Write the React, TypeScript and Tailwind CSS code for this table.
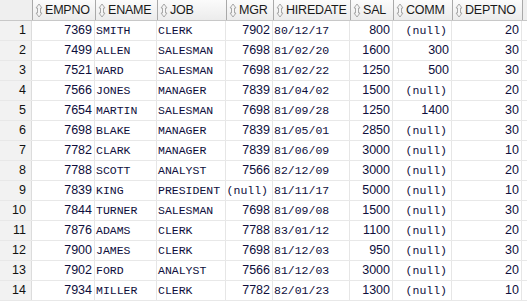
import React from 'react';

type Emp = [string, string, string, string, string, string, string, string];

const cols = ['EMPNO', 'ENAME', 'JOB', 'MGR', 'HIREDATE', 'SAL', 'COMM', 'DEPTNO'];

const rows: Emp[] = [
  ['7369', 'SMITH', 'CLERK', '7902', '80/12/17', '800', '', '20'],
  ['7499', 'ALLEN', 'SALESMAN', '7698', '81/02/20', '1600', '300', '30'],
  ['7521', 'WARD', 'SALESMAN', '7698', '81/02/22', '1250', '500', '30'],
  ['7566', 'JONES', 'MANAGER', '7839', '81/04/02', '1500', '', '20'],
  ['7654', 'MARTIN', 'SALESMAN', '7698', '81/09/28', '1250', '1400', '30'],
  ['7698', 'BLAKE', 'MANAGER', '7839', '81/05/01', '2850', '', '30'],
  ['7782', 'CLARK', 'MANAGER', '7839', '81/06/09', '3000', '', '10'],
  ['7788', 'SCOTT', 'ANALYST', '7566', '82/12/09', '3000', '', '20'],
  ['7839', 'KING', 'PRESIDENT', '', '81/11/17', '5000', '', '10'],
  ['7844', 'TURNER', 'SALESMAN', '7698', '81/09/08', '1500', '', '30'],
  ['7876', 'ADAMS', 'CLERK', '7788', '83/01/12', '1100', '', '20'],
  ['7900', 'JAMES', 'CLERK', '7698', '81/12/03', '950', '', '30'],
  ['7902', 'FORD', 'ANALYST', '7566', '81/12/03', '3000', '', '20'],
  ['7934', 'MILLER', 'CLERK', '7782', '82/01/23', '1300', '', '10'],
];

// which columns hold numbers (right aligned)
const numeric = [true, false, false, true, false, true, true, true];

const grid = 'grid grid-cols-[32px_63px_62px_69px_47px_77px_43px_59px_70px_1fr]';
const sans = "font-['Liberation_Sans',Arial,sans-serif] text-[12.5px]";
const head = "font-['Liberation_Sans',Arial,sans-serif] text-[12.5px] tracking-[-0.2px]";
const mono = "font-['Liberation_Mono','Courier_New',monospace] text-[11.5px]";

const SortIcon = () => (
  <svg width="8" height="15" viewBox="0 0 8 15" className="shrink-0">
    <path
      d="M4 1 L7 5 L5.5 5 L5.5 10 L7 10 L4 14 L1 10 L2.5 10 L2.5 5 L1 5 Z"
      fill="#f5f5f5"
      stroke="#a8a8a8"
      strokeWidth="1"
      strokeLinejoin="round"
    />
  </svg>
);

const Cell = ({ value, num }: { value: string; num: boolean }) => {
  if (num && value === '') {
    return (
      <div className={`${mono} flex items-center justify-end pr-[4px] border-r border-[#e6e6e6] text-[#0e0e3c]`}>
        (null)
      </div>
    );
  }
  if (num) {
    return (
      <div className={`${sans} flex items-center justify-end pr-[2px] border-r border-[#e6e6e6] text-[#0e0e3c]`}>
        {value}
      </div>
    );
  }
  return (
    <div className={`${mono} flex items-center pl-[1px] border-r border-[#e6e6e6] text-[#0e0e3c]`}>
      {value}
    </div>
  );
};

export default function App() {
  return (
    <div className="w-[527px] h-[301px] bg-white overflow-hidden">
      {/* column headers */}
      <div className={`${grid} h-[21px] bg-[#efefef] border-b border-[#c8c8c8]`}>
        <div className="bg-[#efefef]" />
        {cols.map((c) => (
          <div
            key={c}
            className={`${head} flex items-center gap-[2px] pl-[2px] overflow-hidden whitespace-nowrap border-l border-[#a9a9a9] bg-gradient-to-b from-[#fbfbfb] to-[#ececec] text-[#1a1a1a]`}
          >
            <SortIcon />
            <span>{c}</span>
          </div>
        ))}
        <div className="border-l border-[#a9a9a9] bg-[#efefef]" />
      </div>

      {/* data rows */}
      {rows.map((r, i) => (
        <div key={i} className={`${grid} h-[20px] border-b border-[#e8e8e8]`}>
          <div className={`${sans} flex items-center justify-end pr-[5px] bg-[#f2f2f2] border-r border-[#dcdcdc] text-[#111]`}>
            {i + 1}
          </div>
          {r.map((v, j) => (
            <Cell key={j} value={v} num={numeric[j]} />
          ))}
          <div />
        </div>
      ))}
      <div className="h-[2px] bg-[#7a7a7a]" />
    </div>
  );
}
